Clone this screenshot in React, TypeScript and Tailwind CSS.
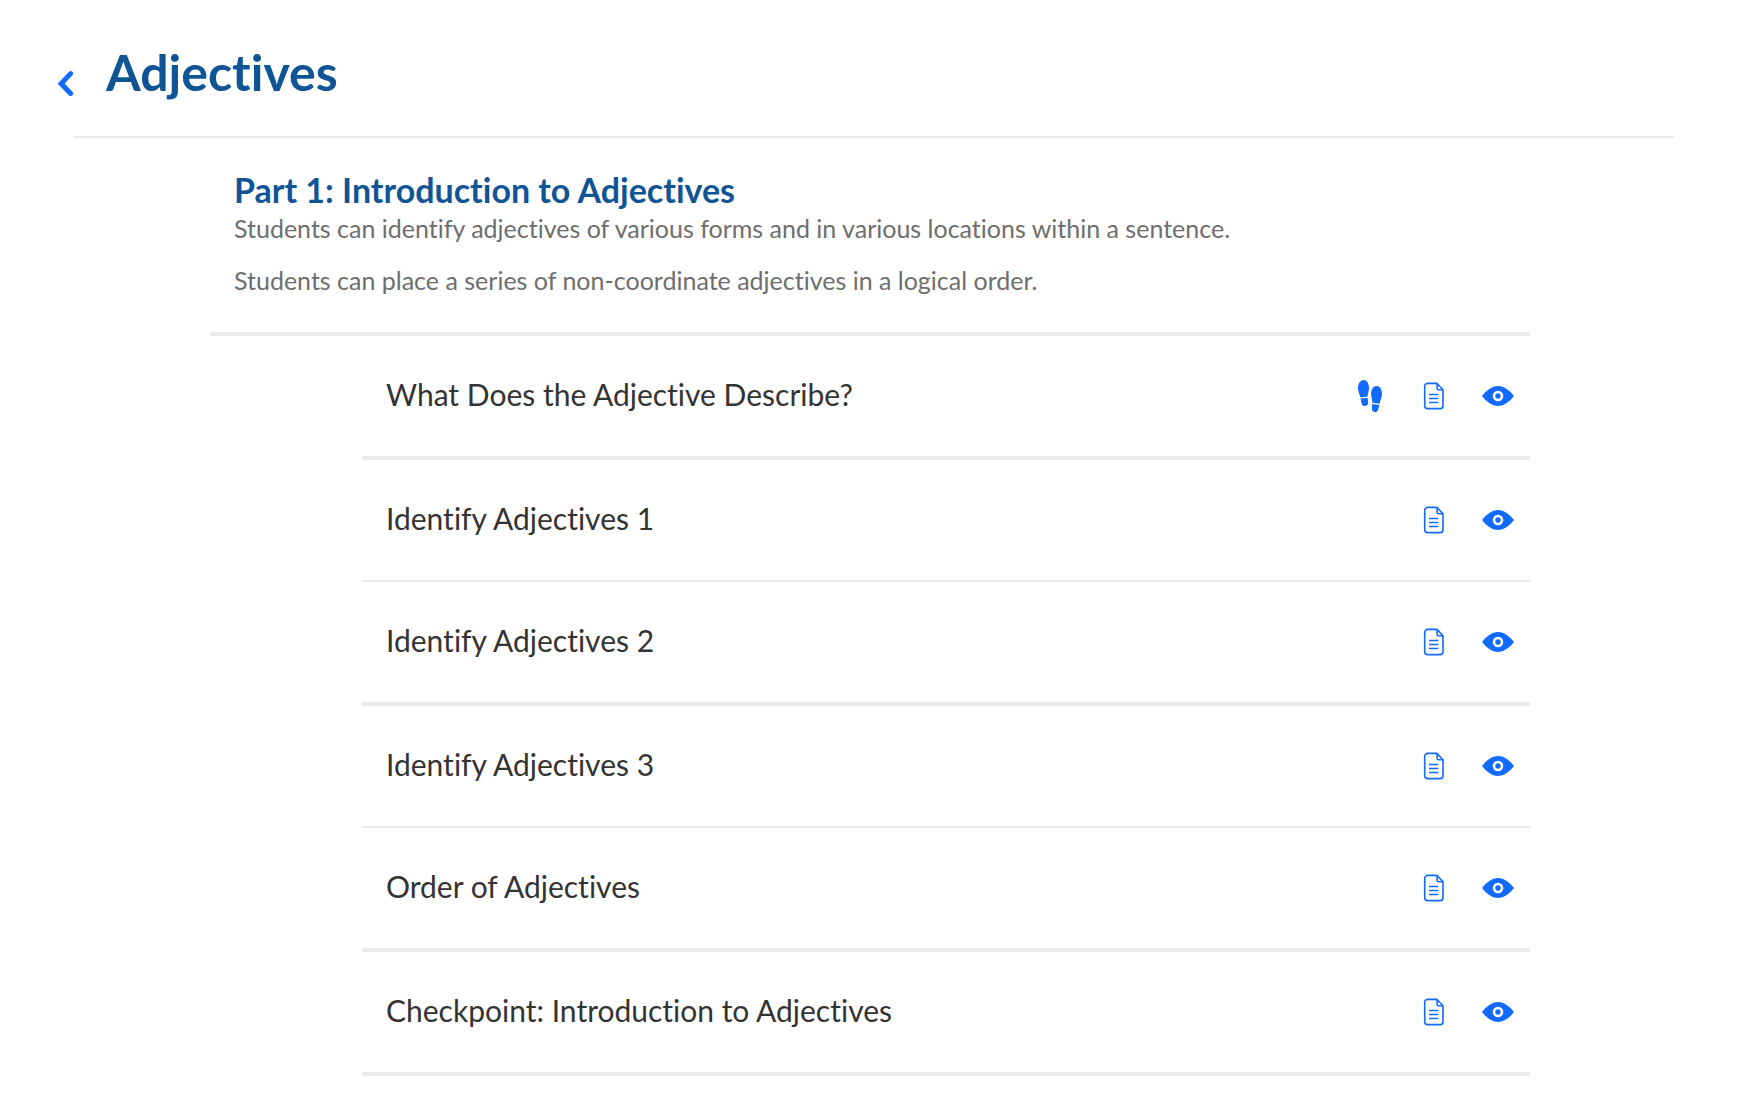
type Lesson = { title: string; steps?: boolean; thick: boolean };

const objectives = [
  "Students can identify adjectives of various forms and in various locations within a sentence.",
  "Students can place a series of non-coordinate adjectives in a logical order.",
];

const lessons: Lesson[] = [
  { title: "What Does the Adjective Describe?", steps: true, thick: true },
  { title: "Identify Adjectives 1", thick: false },
  { title: "Identify Adjectives 2", thick: true },
  { title: "Identify Adjectives 3", thick: false },
  { title: "Order of Adjectives", thick: true },
  { title: "Checkpoint: Introduction to Adjectives", thick: true },
];

function ChevronIcon() {
  return (
    <svg viewBox="0 0 16 28" className="h-7 w-4" fill="none" stroke="currentColor" strokeWidth="5" strokeLinecap="round" aria-hidden="true">
      <path d="M12.600 3.600 3.200 13.600l9.400 9.800" strokeLinejoin="miter" />
    </svg>
  );
}

function FootprintsIcon() {
  return (
    <svg viewBox="0 0 32 32" className="size-8" fill="currentColor" aria-hidden="true">
      <path d="M9.600 0C6.200 0 4 3.600 4 8.200c0 3.600 1.800 6 2.300 9.300l7.300-1c0-2.600 1.400-4.800 1.400-8.500C15 3.400 12.800 0 9.600 0Z" />
      <path d="m6.500 18.600 7.100-.9.600 4.900c.2 1.900-1 3.200-3 3.400-2 .2-3.400-.8-3.700-2.700Z" />
      <path d="M22.500 6c-3.300 0-5.400 3.500-5.400 8 0 3.700 1.300 5.700 1.300 8.700l7.200 1.100c.5-3.400 2.400-5.800 2.400-9.500C28 9.500 25.800 6 22.500 6Z" />
      <path d="m18.200 23.900 7.100 1-1 4.600c-.4 1.900-1.700 2.700-3.500 2.500-2-.2-3-1.500-2.900-3.400Z" />
    </svg>
  );
}

function DocumentIcon() {
  return (
    <svg viewBox="0 0 32 32" className="size-8" fill="none" stroke="currentColor" strokeWidth="1.600" aria-hidden="true">
      <path d="M18.900 3.400H9.600a2.900 2.900 0 0 0-2.900 2.900v19.400a2.900 2.900 0 0 0 2.900 2.900h12.500a2.900 2.900 0 0 0 2.900-2.900V9.800Z" />
      <path d="M19.100 3.400v4.900c0 .9.400 1.400 1.400 1.400H25" />
      <path d="M11 14.500h9.300M11 18.500h9.300M11 22.500h9.300" />
    </svg>
  );
}

function EyeIcon() {
  return (
    <svg viewBox="0 0 32 32" className="size-8" fill="currentColor" aria-hidden="true">
      <path
        fillRule="evenodd"
        d="M0 16C4.300 10.500 9.900 6 16 6s11.700 4.500 16 10c-4.300 5.600-9.900 10-16 10S4.300 21.600 0 16ZM16 10.700a5.300 5.300 0 1 0 0 10.600 5.300 5.300 0 0 0 0-10.600Z"
      />
      <circle cx="16" cy="16" r="2.700" />
    </svg>
  );
}

function LessonRow({ title, steps, thick }: Lesson) {
  return (
    <li className={`border-[#eaeaea] ${thick ? "border-b-4" : "border-b-2"}`}>
      <div className="flex h-[120px] items-center justify-between pr-4 pl-6">
        <h3 className="pb-1 text-[30px] leading-10 text-[#333333]">{title}</h3>
        <div className="flex gap-8 text-[#126bff]">
          {steps && (
            <button type="button" aria-label={`Steps for ${title}`}>
              <FootprintsIcon />
            </button>
          )}
          <button type="button" aria-label={`Worksheet for ${title}`}>
            <DocumentIcon />
          </button>
          <button type="button" aria-label={`Preview ${title}`}>
            <EyeIcon />
          </button>
        </div>
      </div>
    </li>
  );
}

export default function App() {
  return (
    <main className="min-h-screen bg-white font-['Lato',sans-serif] [font-variant-ligatures:none]">
      <header className="flex items-end gap-8 px-[58px] pt-[42px] pb-[34px]">
        <button type="button" aria-label="Back" className="flex h-9 items-center text-[#126bff]">
          <ChevronIcon />
        </button>
        <h1 className="text-[50px] leading-[60px] font-bold text-[#0f5596]">Adjectives</h1>
      </header>
      <div className="mr-16 ml-[74px] border-t-2 border-[#eaeaea]">
        <section className="mr-36 ml-[136px]">
          <div className="border-b-4 border-[#eaeaea] px-6 pt-8 pb-[38px]">
            <h2 className="mb-1 text-[34px] leading-10 font-bold text-[#0f5596]">Part 1: Introduction to Adjectives</h2>
            <div className="flex flex-col gap-6 text-[25px] leading-7 text-[#6e6e6e]">
              {objectives.map((text) => (
                <p key={text}>{text}</p>
              ))}
            </div>
          </div>
          <ul className="ml-[152px]">
            {lessons.map((lesson) => (
              <LessonRow key={lesson.title} {...lesson} />
            ))}
          </ul>
        </section>
      </div>
    </main>
  );
}
